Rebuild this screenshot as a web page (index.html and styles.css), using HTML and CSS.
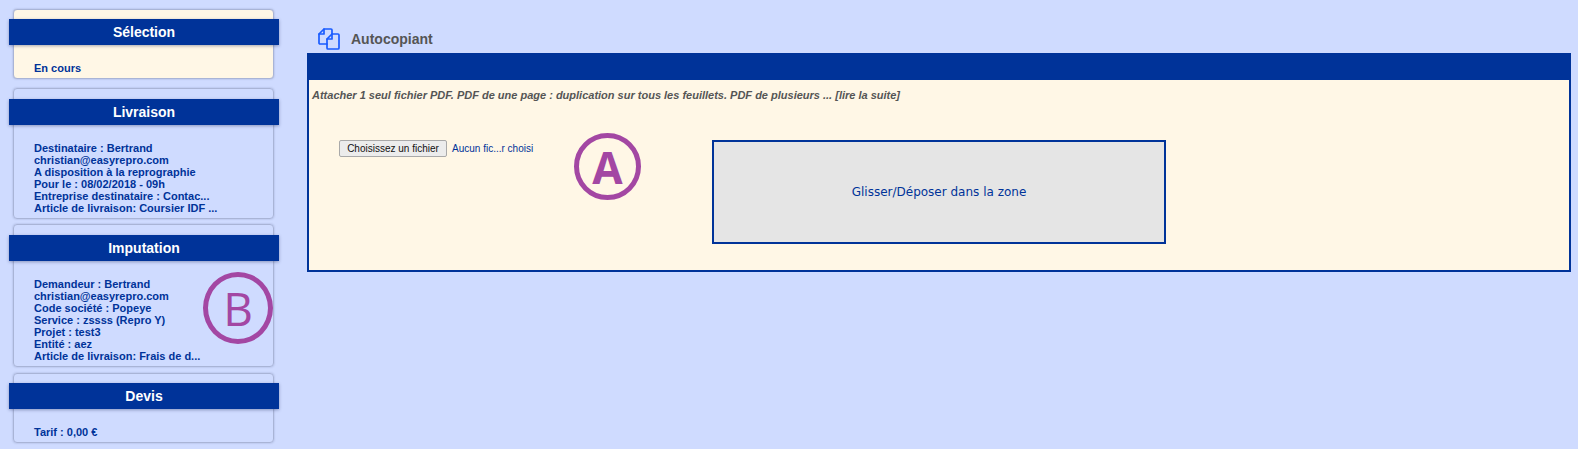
FILE: index.html
```html
<!doctype html>
<html>
<head>
<meta charset="utf-8">
<meta name="viewport" content="width=device-width, initial-scale=1">
<title>Autocopiant</title>
<link rel="stylesheet" href="styles.css">
</head>

<body>
<div class="page">
	<div class="sidebar">
		<div class="card card-selection">
			<h2>Sélection</h2>
			<div class="lines">En cours</div>
		</div>
		<div class="card card-livraison">
			<h2>Livraison</h2>
			<div class="lines">
				Destinataire : Bertrand<br>
				christian@easyrepro.com<br>
				A disposition à la reprographie<br>
				Pour le : 08/02/2018 - 09h<br>
				Entreprise destinataire : Contac...<br>
				Article de livraison: Coursier IDF ...
			</div>
		</div>
		<div class="card card-imputation">
			<h2>Imputation</h2>
			<div class="lines">
				Demandeur : Bertrand<br>
				christian@easyrepro.com<br>
				Code société : Popeye<br>
				Service : zssss (Repro Y)<br>
				Projet : test3<br>
				Entité : aez<br>
				Article de livraison: Frais de d...
			</div>
			<div class="mark mark-b">B</div>
		</div>
		<div class="card card-devis">
			<h2>Devis</h2>
			<div class="lines">Tarif : 0,00 €</div>
		</div>
	</div>

	<div class="main">
		<div class="title">
			<svg class="title-icon" width="22" height="22" viewBox="0 0 22 22" fill="none" stroke="#1a5cff" stroke-width="1.7" stroke-linejoin="round" stroke-linecap="round">
				<path d="M9 16H2a1 1 0 0 1-1-1V6l5-5h7a1 1 0 0 1 1 1v3.500"/>
				<path d="M6 1v5H1"/>
				<path d="M14 6h6a1 1 0 0 1 1 1v13a1 1 0 0 1-1 1H10a1 1 0 0 1-1-1V11z"/>
				<path d="M14 6v5H9"/>
			</svg>
			<span>Autocopiant</span>
		</div>
		<div class="panel">
			<div class="panel-head"></div>
			<div class="panel-body">
				<p class="notice">Attacher 1 seul fichier PDF. PDF de une page : duplication sur tous les feuillets. PDF de plusieurs ... [lire la suite]</p>
				<div class="upload-row">
					<div class="file-field">
						<button class="file-btn">Choisissez un fichier</button>
						<span class="file-name">Aucun fic...r choisi</span>
					</div>
					<div class="dropzone">Glisser/Déposer dans la zone</div>
				</div>
				<div class="mark mark-a">A</div>
			</div>
		</div>
	</div>
</div>
</body>
</html>
```

FILE: styles.css
```css
html, body{
	margin:0;
	padding:0;
}
body{
	background-color:#cfdbff;
	font-family:"Liberation Sans", Arial, sans-serif;
	color:#003399;
}
.page{
	display:flex;
	align-items:flex-start;
	height:449px;
	overflow:hidden;
}
.sidebar{
	width:307px;
	flex-shrink:0;
	padding:9px 0 0 13px;
	box-sizing:border-box;
}
.card{
	position:relative;
	width:261px;
	box-sizing:border-box;
	border:1px solid #a9b4d6;
	border-radius:4px;
	padding-top:9px;
	box-shadow:0 0 2px rgba(60,70,110,.35);
}
.card-selection{
	height:70px;
	margin-bottom:9px;
	background-color:#fff7e6;
}
.card-livraison{
	height:131px;
	margin-bottom:5px;
	padding-top:10px;
}
.card-imputation{
	height:143px;
	margin-bottom:6px;
	padding-top:10px;
}
.card-devis{
	height:70px;
}
.card h2{
	margin:0 -6px 0 -5px;
	height:26px;
	line-height:26px;
	background-color:#003399;
	color:#fff;
	font-size:14px;
	font-weight:bold;
	text-align:center;
	box-shadow:0 1px 3px rgba(30,40,90,.4);
}
.lines{
	padding:17px 0 0 20px;
	font-size:11px;
	font-weight:bold;
	line-height:12px;
}
.main{
	flex:1;
	padding-right:7px;
	min-width:0;
}
.title{
	display:flex;
	align-items:center;
	height:53px;
	padding:25px 0 0 11px;
	box-sizing:border-box;
	color:#555;
	font-size:14px;
	font-weight:bold;
}
.title-icon{
	margin-right:11px;
}
.panel{
	border:2px solid #003399;
	background-color:#fff7e6;
	height:219px;
	box-sizing:border-box;
}
.panel-head{
	height:25px;
	background-color:#003399;
}
.panel-body{
	position:relative;
}
.notice{
	margin:0;
	padding:9px 0 0 3px;
	color:#555;
	font-size:11px;
	font-weight:bold;
	font-style:italic;
	line-height:13px;
}
.upload-row{
	display:flex;
	align-items:flex-start;
	margin-top:38px;
	padding-left:30px;
}
.file-field{
	display:flex;
	align-items:center;
	width:373px;
	height:17px;
}
.file-btn{
	width:108px;
	height:17px;
	padding:0;
	border:1px solid #a9a9a9;
	border-radius:2px;
	background-color:#ececec;
	color:#111;
	font-family:"Liberation Sans", Arial, sans-serif;
	font-size:10px;
	line-height:15px;
}
.file-name{
	margin-left:5px;
	font-size:10px;
}
.dropzone{
	width:454px;
	height:104px;
	box-sizing:border-box;
	border:2px solid #003399;
	background-color:#e5e5e5;
	display:flex;
	align-items:center;
	justify-content:center;
	font-family:"DejaVu Sans", Verdana, sans-serif;
	font-size:12px;
}
.mark{
	position:absolute;
	box-sizing:border-box;
	border:5px solid #a347a3;
	border-radius:50%;
	color:#a347a3;
	display:flex;
	align-items:center;
	justify-content:center;
	font-family:"Open Sans", sans-serif;
}
.mark-a{
	left:265px;
	top:53px;
	width:67px;
	height:67px;
	font-size:44px;
	font-weight:700;
}
.mark-b{
	left:189px;
	top:47px;
	width:70px;
	height:72px;
	font-size:46px;
}
```
